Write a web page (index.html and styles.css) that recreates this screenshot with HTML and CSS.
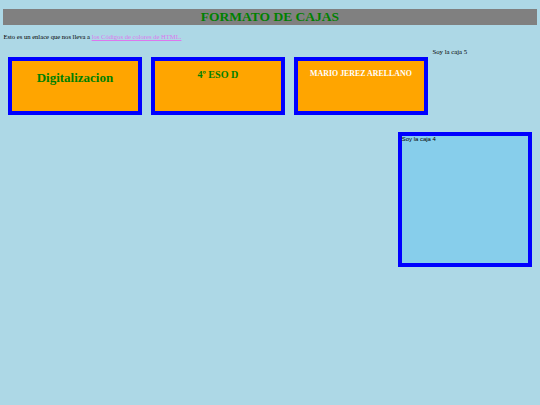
FILE: index.html
```html
<!DOCTYPE html>
<html lang="es">
<head>
<meta charset="utf-8">
<title>Formato de cajas</title>
<link rel="stylesheet" href="styles.css">
</head>
<body>
<h1 class="title">FORMATO DE CAJAS</h1>
<p class="intro">Esto es un enlace que nos lleva a <a class="link" href="#">los Códigos de colores de HTML.</a></p>
<div class="row">
  <div class="box"><h1 class="box-h1">Digitalizacion</h1></div>
  <div class="box"><h2 class="box-h2">4º ESO D</h2></div>
  <div class="box"><h3 class="box-h3">MARIO JEREZ ARELLANO</h3></div>
  <div class="caja5">Soy la caja 5</div>
</div>
<div class="row-right">
  <div class="caja4">Soy la caja 4</div>
</div>
</body>
</html>
```
FILE: styles.css
```css
html, body {
  background: #add8e6;
}
body {
  margin: 0;
  padding: 0 3.4px;
  font-family: "Liberation Serif", "Times New Roman", serif;
  font-size: 6.75px;
  color: #000;
}
.title {
  margin: 9px 0 0 0;
  background: #808080;
  color: #008000;
  text-align: center;
  font-size: 13.5px;
  line-height: 15.6px;
  font-weight: bold;
}
.intro {
  margin: 8.6px 0 4.9px 0;
  font-size: 6.6px;
  line-height: 7.8px;
}
.link {
  color: #dd77ee;
}
.row {
  display: flex;
  align-items: flex-start;
}
.box {
  box-sizing: content-box;
  width: 126.6px;
  height: 50.6px;
  border: 4.22px solid #0000ff;
  background: #ffa500;
  margin: 11px 4.22px 0 4.22px;
  text-align: center;
  display: flow-root;
}
.box-h1 {
  margin: 9px 0;
  font-size: 13px;
  line-height: 15.5px;
  color: #008000;
}
.box-h2 {
  margin: 8.4px 0;
  font-size: 10.1px;
  line-height: 11.6px;
  color: #008000;
}
.box-h3 {
  margin: 7.9px 0;
  font-size: 7.9px;
  line-height: 9.1px;
  color: #ffffff;
}
.caja5 {
  margin: 1.8px 0 0 0;
  line-height: 7.8px;
}
.row-right {
  display: flex;
  justify-content: flex-end;
}
.caja4 {
  box-sizing: content-box;
  width: 126.6px;
  height: 126.6px;
  border: 4.22px solid #0000ff;
  background: #87ceeb;
  margin: 16.6px 4.22px 0 0;
  font-family: "Liberation Sans", Arial, sans-serif;
  font-size: 5.95px;
  line-height: 6.9px;
}
```
